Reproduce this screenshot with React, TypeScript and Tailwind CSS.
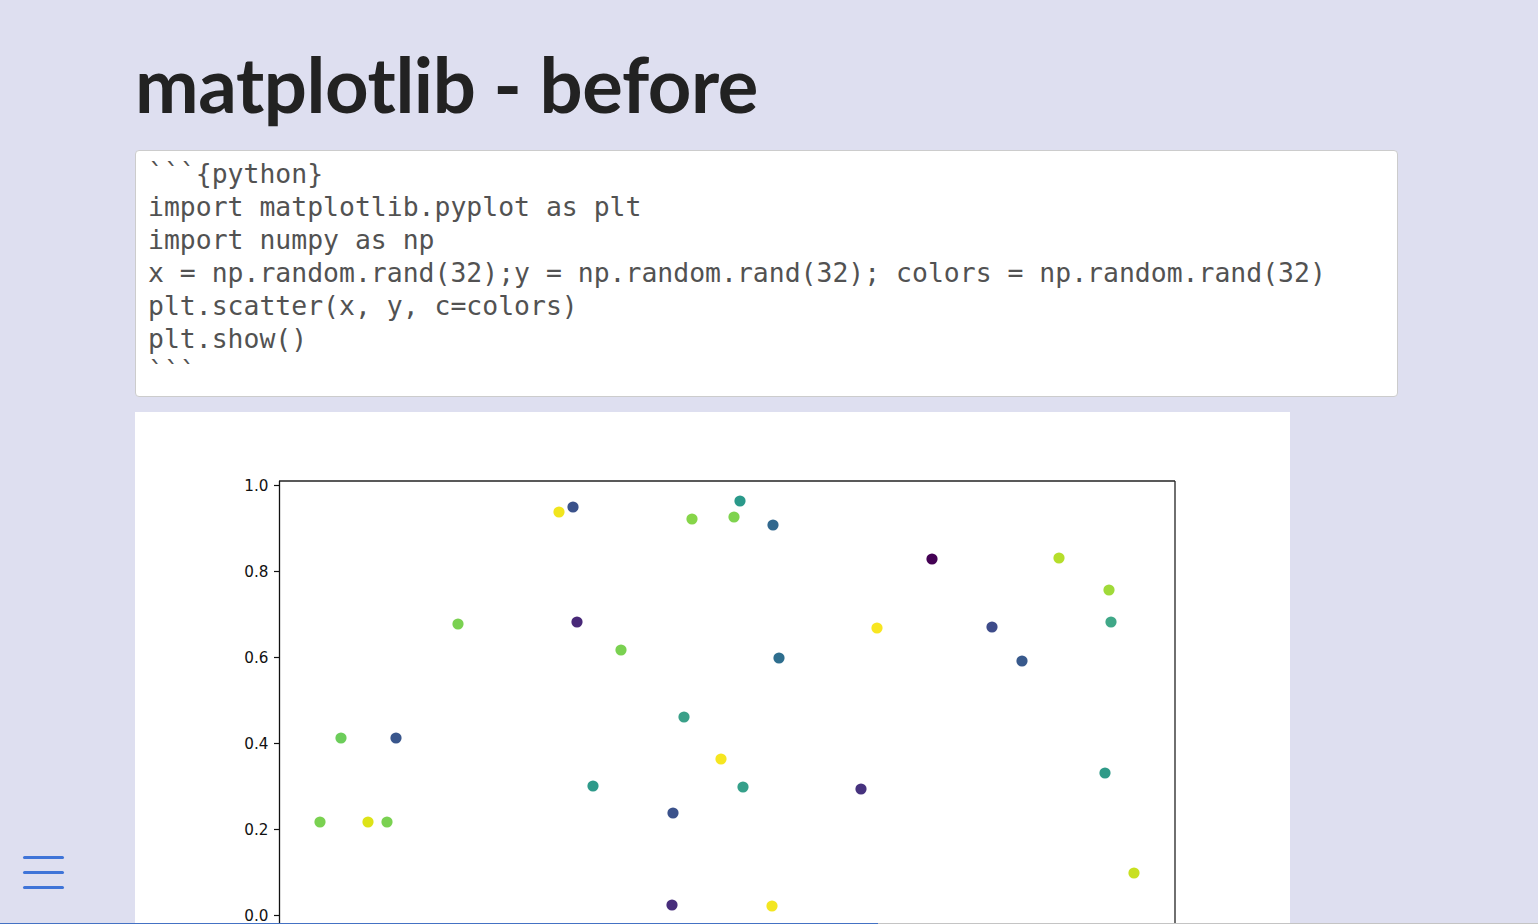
import React from "react";

const points: [number, number, string][] = [
  [320, 822, "#7ad151"],
  [341, 738, "#6ccd5a"],
  [368, 822, "#dde318"],
  [387, 822, "#7ad151"],
  [396, 738, "#39568c"],
  [458, 624, "#7ad151"],
  [559, 512, "#f1e51d"],
  [573, 507, "#3b528b"],
  [577, 622, "#482878"],
  [593, 786, "#2e9a8a"],
  [621, 650, "#7ad151"],
  [673, 813, "#3b528b"],
  [672, 905, "#472d7b"],
  [684, 717, "#3aa089"],
  [692, 519, "#86d549"],
  [721, 759, "#f6e620"],
  [734, 517, "#7fd34e"],
  [740, 501, "#2a998a"],
  [743, 787, "#35a08a"],
  [772, 906, "#f3e621"],
  [773, 525, "#31688e"],
  [779, 658, "#2e6e8e"],
  [861, 789, "#46327e"],
  [877, 628, "#f8e621"],
  [932, 559, "#440154"],
  [992, 627, "#3e4c8a"],
  [1022, 661, "#38598c"],
  [1059, 558, "#b5de2b"],
  [1105, 773, "#2f9a88"],
  [1109, 590, "#a0da39"],
  [1111, 622, "#40a888"],
  [1134, 873, "#c8e020"],
];

const code = `\`\`\`{python}
import matplotlib.pyplot as plt
import numpy as np
x = np.random.rand(32);y = np.random.rand(32); colors = np.random.rand(32)
plt.scatter(x, y, c=colors)
plt.show()
\`\`\``;

const OX = 135;
const OY = 412;

function Chart() {
  const ticks = [1.0, 0.8, 0.6, 0.4, 0.2, 0.0];
  const yOf = (v: number) => 915.5 - 430 * v - OY;
  return (
    <svg width="1155" height="560" viewBox="0 0 1155 560" className="block">
      <line x1={279 - OX} y1={481 - OY} x2={1175 - OX} y2={481 - OY} stroke="#222" strokeWidth="1.3" />
      <line x1={279.5 - OX} y1={481 - OY} x2={279.5 - OX} y2={560} stroke="#111" strokeWidth="1.3" />
      <line x1={1175 - OX} y1={481 - OY} x2={1175 - OX} y2={560} stroke="#222" strokeWidth="1.3" />
      {ticks.map((t) => (
        <g key={t}>
          <line x1={274 - OX} y1={yOf(t)} x2={279 - OX} y2={yOf(t)} stroke="#111" strokeWidth="1.2" />
          <text
            x={268.5 - OX}
            y={yOf(t) + 5.5}
            textAnchor="end"
            fontSize="15.2"
            fill="#111"
            style={{ fontFamily: '"DejaVu Sans", sans-serif' }}
          >
            {t.toFixed(1)}
          </text>
        </g>
      ))}
      {points.map(([x, y, c], i) => (
        <circle key={i} cx={x - OX} cy={y - OY} r="5.6" fill={c} />
      ))}
    </svg>
  );
}

export default function App() {
  return (
    <div className="relative h-[924px] w-full overflow-hidden bg-[#dedff0]">
      <div className="flex flex-col pl-[135px] pt-[36px]">
        <h1
          className="text-[76px] font-bold leading-[96px] text-[#222] tracking-[-0.4px]"
          style={{ fontFamily: '"Lato", "Noto Sans", sans-serif' }}
        >
          matplotlib - before
        </h1>
        <pre
          className="mt-[18px] w-[1263px] h-[247px] overflow-hidden rounded-[4px] border border-[#cccccc] bg-white pl-[12px] pt-[6px] text-[26.45px] leading-[33px] text-[#525252]"
          style={{ fontFamily: '"DejaVu Sans Mono", monospace' }}
        >
          {code}
        </pre>
        <div className="mt-[15px] w-[1155px] bg-white">
          <Chart />
        </div>
      </div>

      <div className="absolute left-[23px] top-[856px] flex w-[41px] flex-col gap-[12px]">
        <div className="h-[3px] rounded-full bg-[#3f74d8]" />
        <div className="h-[3px] rounded-full bg-[#3f74d8]" />
        <div className="h-[3px] rounded-full bg-[#3f74d8]" />
      </div>

      <div className="absolute bottom-0 left-0 h-[1px] w-full bg-[#c4c4c4]">
        <div className="h-full w-[878px] bg-[#4472c4]" />
      </div>
    </div>
  );
}
